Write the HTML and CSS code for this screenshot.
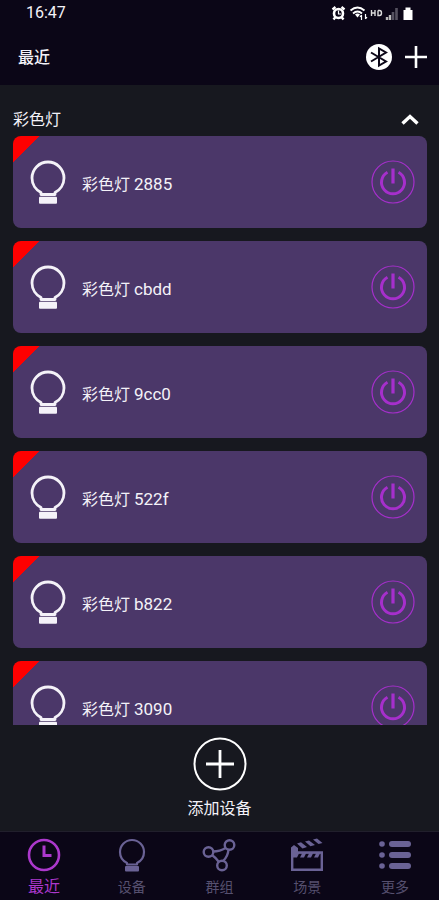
FILE: index.html
```html
<!DOCTYPE html>
<html lang="zh-CN">
<head>
<meta charset="utf-8">
<meta name="viewport" content="width=device-width, initial-scale=1">
<title>最近</title>
<link rel="stylesheet" href="styles.css">
</head>
<body>
<svg class="defs" aria-hidden="true">
  <symbol id="bulb" viewBox="0 0 36 44">
    <path d="M11 34.500V32.500C6 30 2 24.500 2 18A16 16 0 0 1 34 18C34 24.500 30 30 25 32.500V34.500Z" fill="none" stroke="currentColor" stroke-width="2.800" stroke-linejoin="round"/>
    <rect x="9" y="36.800" width="18" height="7" rx="1" fill="currentColor"/>
  </symbol>
  <symbol id="power" viewBox="0 0 44 44">
    <circle cx="22" cy="22" r="21" fill="none" stroke="currentColor" stroke-width="1.200"/>
    <path d="M16.500 12.200A11.500 11.500 0 1 0 27.500 12.200" fill="none" stroke="currentColor" stroke-width="3"/>
    <path d="M22 8.500V23.500" stroke="currentColor" stroke-width="3.200"/>
  </symbol>
</svg>
<div class="status">
  <span>16:47</span>
  <svg width="84" height="16" viewBox="0 0 84 16" aria-hidden="true">
    <g fill="none" stroke="#fff">
      <circle cx="7.500" cy="8.500" r="4.500" stroke-width="2.600"/>
      <path d="M1.500 4.500L4.500 2M13.500 4.500L10.500 2M2.500 14.500l2-2.500M12.500 14.500l-2-2.500" stroke-width="2.400"/>
      <path d="M7.500 5.500V9H10" stroke-width="1.200"/>
      <path d="M19.500 5.500Q26.500 -.5 33.500 5.500M22 8.500Q26.500 4.500 31 8.500" stroke-width="1.800"/>
    </g>
    <path d="M24 9.500Q26.500 7.500 29 9.500L26.500 12.500Z" fill="#fff"/>
    <path d="M30.500 15V10M29 12l1.500-2M34.500 9v5M36 12l-1.500 2" stroke="#fff" stroke-width="1.200"/>
    <path d="M40.500 5v6M44 5v6M40.500 8H44M47 5.500V10.500H48.500Q50.500 10.500 50.500 8T48.500 5.500H47" fill="none" stroke="#ddd" stroke-width="1.400"/>
    <path d="M56 15v-3M59 15v-5" stroke="#bbb" stroke-width="2.400"/>
    <path d="M62 15V7M65.500 15V3" stroke="#55515f" stroke-width="2.600"/>
    <path d="M72.500 5h2V2.500h5V5h2V15h-9Z" fill="#fff"/>
  </svg>
</div>
<header class="header">
  <h1>最近</h1>
  <div class="actions">
    <button type="button" aria-label="蓝牙">
      <svg width="26" height="26" viewBox="0 0 26 26"><circle cx="13" cy="13" r="13" fill="#fff"/><path d="M5 8.500L20 17.500L13 21.500V4.500L20 8.500L5 17.500" fill="none" stroke="#0c0718" stroke-width="2"/></svg>
    </button>
    <button type="button" aria-label="添加">
      <svg width="24" height="24" viewBox="0 0 24 24"><path d="M12 1V23M1 12H23" stroke="#fff" stroke-width="2.600"/></svg>
    </button>
  </div>
</header>
<main class="main">
  <button type="button" class="group" aria-expanded="true">
    <span>彩色灯</span>
    <svg width="18" height="12" viewBox="0 0 18 12" aria-hidden="true"><path d="M1.500 9.500L9 2.500L16.500 9.500" fill="none" stroke="#fff" stroke-width="3.400"/></svg>
  </button>
  <ul class="list">
    <li class="card"><svg class="bulb" aria-hidden="true"><use href="#bulb"/></svg><span class="name">彩色灯 <b>2885</b></span><button type="button" aria-label="开关 2885"><svg class="power"><use href="#power"/></svg></button></li>
    <li class="card"><svg class="bulb" aria-hidden="true"><use href="#bulb"/></svg><span class="name">彩色灯 <b>cbdd</b></span><button type="button" aria-label="开关 cbdd"><svg class="power"><use href="#power"/></svg></button></li>
    <li class="card"><svg class="bulb" aria-hidden="true"><use href="#bulb"/></svg><span class="name">彩色灯 <b>9cc0</b></span><button type="button" aria-label="开关 9cc0"><svg class="power"><use href="#power"/></svg></button></li>
    <li class="card"><svg class="bulb" aria-hidden="true"><use href="#bulb"/></svg><span class="name">彩色灯 <b>522f</b></span><button type="button" aria-label="开关 522f"><svg class="power"><use href="#power"/></svg></button></li>
    <li class="card"><svg class="bulb" aria-hidden="true"><use href="#bulb"/></svg><span class="name">彩色灯 <b>b822</b></span><button type="button" aria-label="开关 b822"><svg class="power"><use href="#power"/></svg></button></li>
    <li class="card"><svg class="bulb" aria-hidden="true"><use href="#bulb"/></svg><span class="name">彩色灯 <b>3090</b></span><button type="button" aria-label="开关 3090"><svg class="power"><use href="#power"/></svg></button></li>
  </ul>
</main>
<button type="button" class="add">
  <svg width="54" height="54" viewBox="0 0 54 54" aria-hidden="true"><g fill="none" stroke="#fff"><circle cx="27" cy="27" r="25.500" stroke-width="2"/><path d="M27 13V41M13 27H41" stroke-width="2.800"/></g></svg>
  <span>添加设备</span>
</button>
<nav class="tabs">
  <a class="tab active" href="#recent" aria-current="page">
    <svg width="34" height="34" viewBox="0 0 34 34" aria-hidden="true"><g fill="none" stroke="currentColor"><circle cx="17" cy="17" r="15" stroke-width="2.600"/><path d="M17 7.500V17.500H24.500" stroke-width="3"/></g></svg>
    <span>最近</span>
  </a>
  <a class="tab" href="#devices">
    <svg width="34" height="34" viewBox="0 0 34 34" aria-hidden="true"><path d="M12 26.500V25C8 23 5 19 5 14A12 12 0 0 1 29 14C29 19 26 23 22 25V26.500Z" fill="none" stroke="currentColor" stroke-width="2.200" stroke-linejoin="round"/><rect x="10" y="28" width="14" height="5.500" rx="1" fill="currentColor"/></svg>
    <span>设备</span>
  </a>
  <a class="tab" href="#groups">
    <svg width="34" height="34" viewBox="0 0 34 34" aria-hidden="true"><g fill="none" stroke="currentColor" stroke-width="2.400"><circle cx="6.500" cy="14" r="4.800"/><circle cx="27.500" cy="7" r="4.800"/><circle cx="20" cy="27.500" r="4.800"/><path d="M11 13.500Q18 13.500 23.500 10M26.500 11.500Q26 18 21.500 22.500M10 17Q13.500 19.500 16.500 23.500"/></g></svg>
    <span>群组</span>
  </a>
  <a class="tab" href="#scenes">
    <svg width="34" height="34" viewBox="0 0 34 34" aria-hidden="true"><path d="M2.200 14.500H31.800V31.800H2.200Z" fill="none" stroke="currentColor" stroke-width="2.400"/><path d="M2 14H32V15.500H30L28 19.500H24L26 15.500H23L21 19.500H17L19 15.500H16L14 19.500H10L12 15.500H9L7 19.500H2Z" fill="currentColor"/><path d="M1 14V9.500L4 7L8 10V14ZM7 5.500L11 4.200L17 9L12.500 10.500ZM15 3.500L19 2.500L25 7L20.500 8.200ZM23 1.500L27 .5L32.500 5L28.500 6Z" fill="currentColor"/></svg>
    <span>场景</span>
  </a>
  <a class="tab" href="#more">
    <svg width="34" height="34" viewBox="0 0 34 34" aria-hidden="true"><g fill="currentColor"><circle cx="4" cy="6" r="2.800"/><circle cx="4" cy="17" r="2.800"/><circle cx="4" cy="28" r="2.800"/><rect x="11" y="3" width="22" height="6" rx="3"/><rect x="11" y="14" width="22" height="6" rx="3"/><rect x="11" y="25" width="22" height="6" rx="3"/></g></svg>
    <span>更多</span>
  </a>
</nav>
</body>
</html>
```

FILE: styles.css
```css
* {
  box-sizing: border-box;
}

body {
  display: flex;
  flex-direction: column;
  height: 100vh;
  margin: 0;
  background: #17181f;
  color: #f4f2f8;
  font: 16px/24px Roboto, "Noto Sans CJK SC", sans-serif;
}

svg {
  display: block;
}

button {
  padding: 0;
  border: 0;
  background: none;
  color: inherit;
  font: inherit;
  cursor: pointer;
}

.defs {
  position: absolute;
  width: 0;
  height: 0;
}

.status,
.header {
  display: flex;
  flex: none;
  align-items: center;
  justify-content: space-between;
  background: #0b0617;
}

.status {
  padding: 1px 24px 0 26px;
}

.header {
  padding: 17px 11px 13px 18px;
}

.header h1 {
  margin: 0;
  padding: 4px 0 2px;
  font-size: 16px;
  font-weight: 500;
}

.actions {
  display: flex;
  align-items: center;
  gap: 12px;
}

.main {
  display: flex;
  flex: 1;
  flex-direction: column;
  min-height: 0;
  padding: 0 12px 0 13px;
}

.group {
  display: flex;
  flex: none;
  align-items: center;
  justify-content: space-between;
  padding: 23px 8px 4px 0;
}

.list {
  display: flex;
  flex: 1;
  flex-direction: column;
  gap: 13px;
  min-height: 0;
  margin: 0;
  padding: 0;
  overflow: hidden;
  list-style: none;
}

.card {
  display: flex;
  flex: none;
  align-items: center;
  gap: 16px;
  height: 92px;
  padding: 0 12px 0 17px;
  border-radius: 8px;
  background: linear-gradient(135deg, #f00 19px, #4b3769 19px);
}

.name {
  flex: 1;
  padding-top: 5px;
}

.name b {
  font-size: 17px;
  font-weight: 400;
}

.bulb {
  width: 36px;
  height: 44px;
}

.power {
  width: 44px;
  height: 44px;
  color: #a62fcc;
}

.add {
  display: flex;
  flex: none;
  flex-direction: column;
  align-items: center;
  gap: 6px;
  padding: 12px 0 10px;
}

.tabs {
  display: grid;
  flex: none;
  grid-template-columns: repeat(5, 1fr);
  border-top: 1px solid #211f2c;
  background: #0b0617;
}

.tab {
  display: flex;
  flex-direction: column;
  align-items: center;
  gap: 5px;
  padding: 6px 0 3px;
  color: #6a6295;
  font-size: 14px;
  line-height: 20px;
  text-decoration: none;
}

.tab span {
  color: #56506f;
}

.active,
.active span {
  color: #ac38cc;
}

.active span {
  font-size: 16px;
}
```
